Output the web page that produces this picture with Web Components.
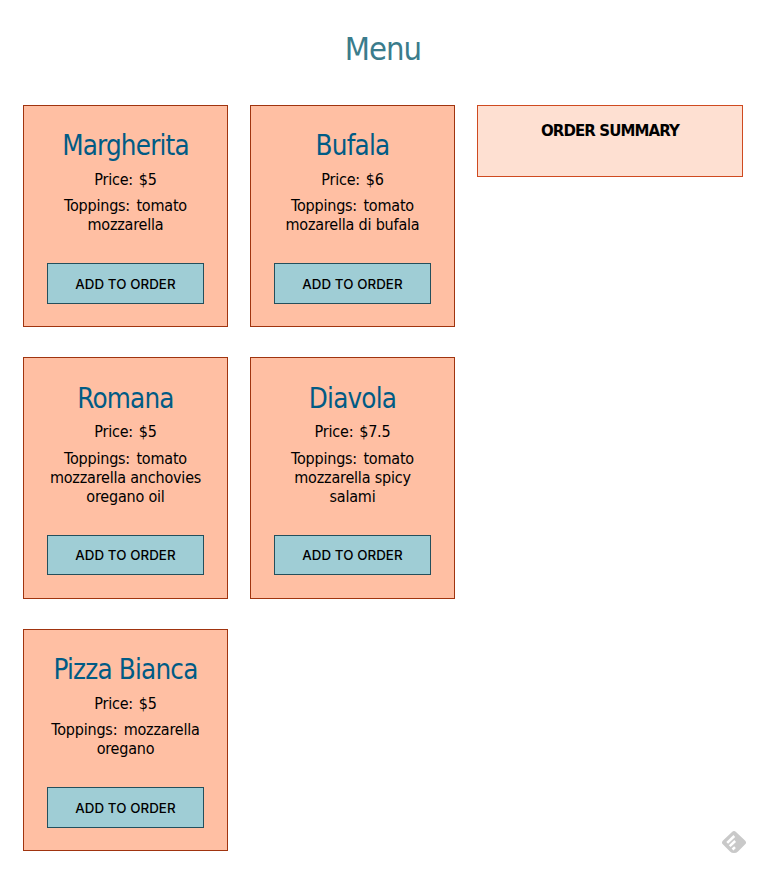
<!DOCTYPE html>
<html lang="en">
<head>
<meta charset="utf-8">
<title>Menu</title>
<style>
html,body{margin:0;background:#fff;height:874px;overflow:hidden}
body{font-family:"DejaVu Sans Condensed","DejaVu Sans",sans-serif;font-stretch:condensed;font-size:16px;color:#000}
</style>
</head>
<body>
<menu-page>
  <pizza-card name="Margherita" price="$5"><span class="first">Toppings: tomato</span><span>mozzarella</span></pizza-card>
  <pizza-card name="Bufala" price="$6"><span class="first">Toppings: tomato</span><span>mozarella di bufala</span></pizza-card>
  <pizza-card name="Romana" price="$5" class="tall"><span class="first">Toppings: tomato</span><span>mozzarella anchovies</span><span>oregano oil</span></pizza-card>
  <pizza-card name="Diavola" price="$7.5" class="tall"><span class="first">Toppings: tomato</span><span>mozzarella spicy</span><span>salami</span></pizza-card>
  <pizza-card name="Pizza Bianca" price="$5"><span class="first">Toppings: mozzarella</span><span>oregano</span></pizza-card>
  <order-summary slot="aside">ORDER SUMMARY</order-summary>
</menu-page>
<feed-badge></feed-badge>
<script>
class MenuPage extends HTMLElement{
  constructor(){super();this.attachShadow({mode:'open'}).innerHTML=`<style>
  :host{display:block;padding:0 15px 0 23px}
  h1{margin:0;padding-top:29px;height:76px;box-sizing:content-box;font-weight:400;font-size:32.5px;line-height:40px;letter-spacing:-1px;text-align:center;color:#3a7c8c}
  main{display:grid;grid-template-columns:432px 266px;column-gap:22px;align-items:start}
  section{display:grid;grid-template-columns:205px 205px;gap:30px 22px;align-items:start}
  </style><h1>Menu</h1><main><section><slot></slot></section><slot name="aside"></slot></main>`}
}
class PizzaCard extends HTMLElement{
  constructor(){super();this.attachShadow({mode:'open'}).innerHTML=`<style>
  :host{display:flex;flex-direction:column;box-sizing:border-box;height:222px;padding:22px 23px 22px;border:1px solid #a0340f;background:#ffbfa3;text-align:center;white-space:nowrap;--drop:0px;--button-height:41px}
  :host(.tall){height:242px;padding-bottom:23px;--drop:1px;--button-height:40px}
  h2{margin:var(--drop) 0 0;font-size:27.5px;line-height:34px;font-weight:400;letter-spacing:-.8px;color:#005b85}
  p{margin:0;line-height:19px;letter-spacing:-.2px}
  .price{margin-top:calc(8px - var(--drop));word-spacing:1.5px}
  .toppings{margin-top:calc(7px + var(--drop))}
  ::slotted(span){display:block}
  ::slotted(.first){word-spacing:2px}
  </style><h2></h2><p class="price"></p><p class="toppings"><slot></slot></p><order-button></order-button>`}
  connectedCallback(){
    this.shadowRoot.querySelector('h2').textContent=this.getAttribute('name');
    this.shadowRoot.querySelector('.price').textContent='Price: '+this.getAttribute('price');
  }
}
class OrderButton extends HTMLElement{
  constructor(){super();this.attachShadow({mode:'open'}).innerHTML=`<style>
  :host{display:block;margin-top:auto}
  button{display:block;width:157px;height:var(--button-height);box-sizing:border-box;margin:0;padding:0;border:1px solid #234f5c;border-radius:0;background:#9fcdd5;color:#000;font:500 13.33px/16px Inter,sans-serif;letter-spacing:.08px}
  </style><button>ADD TO ORDER</button>`}
}
class OrderSummary extends HTMLElement{
  constructor(){super();this.attachShadow({mode:'open'}).innerHTML=`<style>
  :host{display:block;box-sizing:border-box;height:72px;padding-top:16px;border:1px solid #cf4a20;background:#fee0d2;text-align:center}
  h3{margin:0;font-family:"DejaVu Sans",sans-serif;font-stretch:normal;font-size:15px;line-height:19px;font-weight:700;letter-spacing:-.9px}
  </style><h3><slot></slot></h3>`}
}
class FeedBadge extends HTMLElement{
  constructor(){super();this.attachShadow({mode:'open'}).innerHTML=`<style>
  :host{position:absolute;left:721px;top:830px;width:26px;height:24px}
  svg{display:block}
  </style><svg width="26" height="24" viewBox="0 0 26 24"><path d="M11 2Q13 .2 15 2L24 10.5Q26 12.5 24.2 14.3L17 21.5Q15.5 23 13 23Q10.5 23 9 21.5L1.8 14.3Q0 12.5 2 10.5Z" fill="#c9c9c9"/><g stroke="#fff" stroke-width="2.5" fill="none"><path d="M6.2 12.8L13.3 6"/><path d="M8.7 16.2L14.2 11"/><path d="M11.5 19.5L14 17.2"/></g></svg>`}
}
customElements.define('order-button',OrderButton);
customElements.define('pizza-card',PizzaCard);
customElements.define('order-summary',OrderSummary);
customElements.define('feed-badge',FeedBadge);
customElements.define('menu-page',MenuPage);
</script>
</body>
</html>
